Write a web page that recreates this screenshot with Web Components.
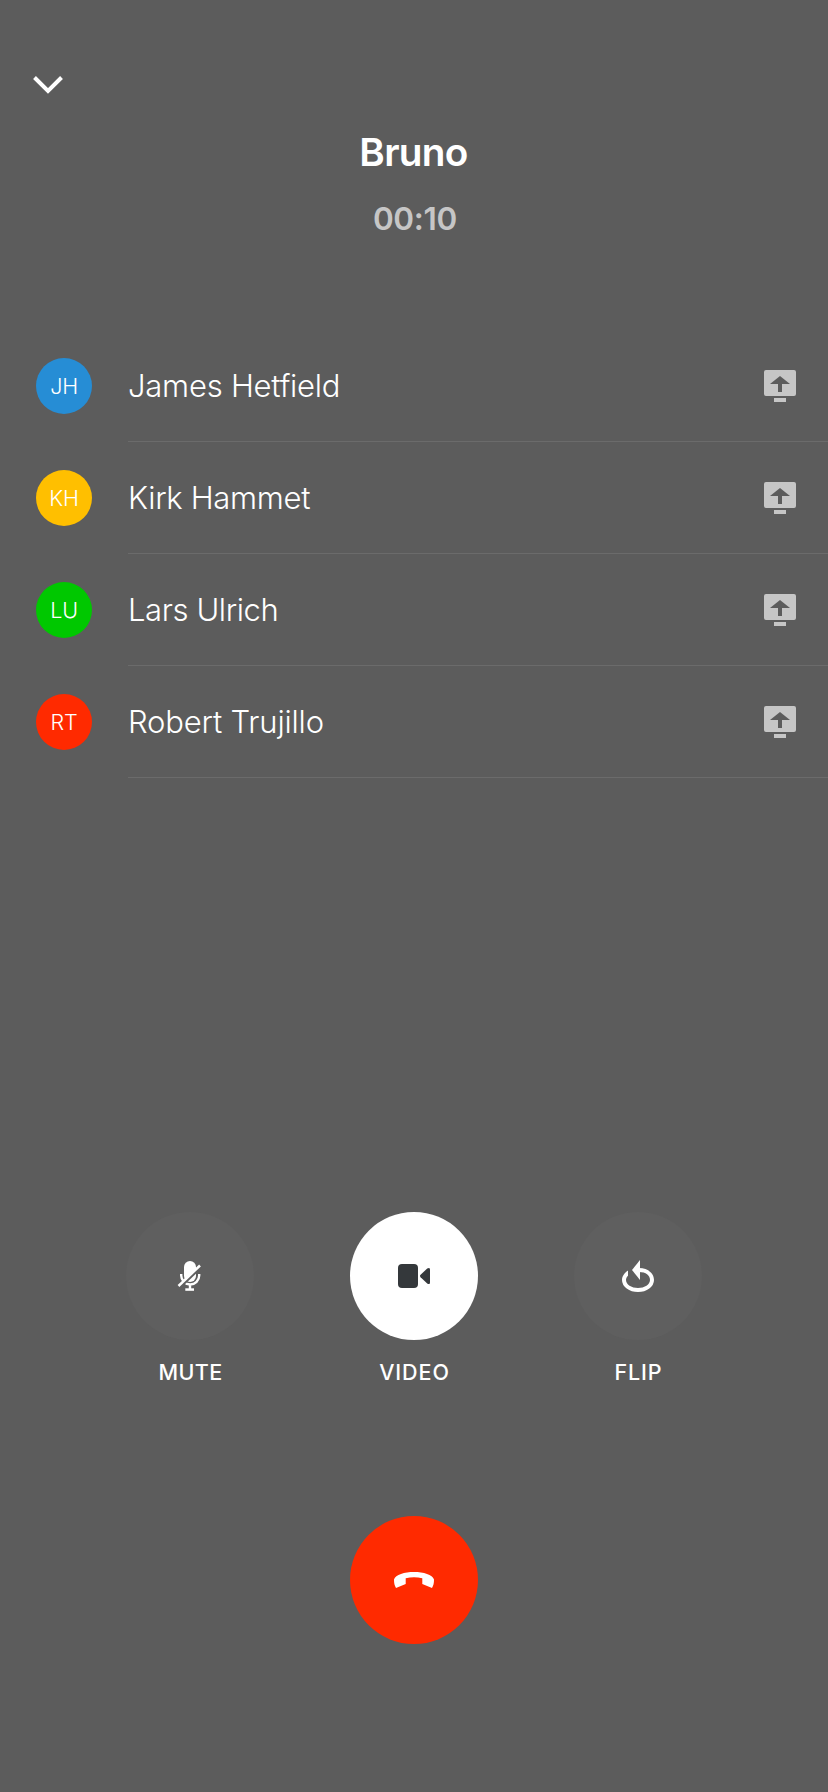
<!DOCTYPE html>
<html lang="en">
<head>
<meta charset="utf-8">
<title>Call</title>
<style>
html,body{margin:0;background:#5c5c5c}
body{font-family:Inter,"Liberation Sans",sans-serif;color:#fff}
</style>
</head>
<body>
<call-screen>
  <call-header name="Bruno" time="00:10"></call-header>
  <call-participant initials="JH" style="--tint:#268dd5;--track:-.24px">James Hetfield</call-participant>
  <call-participant initials="KH" style="--tint:#ffbf00;--track:-.32px">Kirk Hammet</call-participant>
  <call-participant initials="LU" style="--tint:#00c800;--track:-.4px">Lars Ulrich</call-participant>
  <call-participant initials="RT" style="--tint:#ff2a00;--track:-.18px">Robert Trujillo</call-participant>
  <call-button slot="controls" icon="mute" style="--fill:#5f5f5f;--track:.4px">MUTE</call-button>
  <call-button slot="controls" icon="video" style="--fill:#fff;--track:.9px">VIDEO</call-button>
  <call-button slot="controls" icon="flip" style="--fill:#5f5f5f;--track:.9px">FLIP</call-button>
  <call-button slot="hangup" icon="end" style="--fill:#ff2a00"></call-button>
</call-screen>
<script>
const icons = {
  down: '<svg width="32" height="20" viewBox="32 75 32 20" fill="none" stroke="#fff" stroke-width="4"><path d="M34.5 77.5 48 91 61.5 77.5"/></svg>',
  share: '<svg width="32" height="32" viewBox="0 0 32 32" fill="#c6c6c6"><path fill-rule="evenodd" d="M2 0H30Q32 0 32 2V24Q32 26 30 26H2Q0 26 0 24V2Q0 0 2 0ZM16 6 6 14H14V22H18V14H26Z"/><path d="M10 28H22V32H10Z"/></svg>',
  mute: '<svg width="128" height="128" viewBox="126 1212 128 128"><mask id="m" maskUnits="userSpaceOnUse" x="170" y="1250" width="40" height="50"><path fill="#fff" d="M170 1250H210V1300H170Z"/><path d="M176 1290.5 203 1264.8" stroke="#000" stroke-width="3.2"/></mask><g mask="url(#m)"><rect x="184" y="1261" width="12" height="21" rx="6" fill="#fff"/><path d="M181.2 1274V1275.5A9 9 0 0 0 199.2 1275.5V1274M190 1284.5V1289" fill="none" stroke="#fff" stroke-width="2.4"/><path d="M185.3 1288.3H194V1290.8H185.3Z" fill="#fff"/></g><path d="M178.5 1286 200 1265.5" stroke="#fff" stroke-width="2.5"/></svg>',
  video: '<svg width="128" height="128" viewBox="350 1212 128 128" fill="#34383b"><rect x="398" y="1264" width="20" height="24" rx="4"/><path d="M420.6 1274.8 427.2 1268.5Q428 1268 429 1268Q430 1268 430 1269.5V1282.5Q430 1284 429 1284Q428 1284 427.2 1283.5L420.6 1277.2Q419.4 1276 420.6 1274.8Z"/></svg>',
  flip: '<svg width="128" height="128" viewBox="574 1212 128 128" fill="#fff"><path d="M628 1270.6C625 1272.7 622 1276 622 1280A16 12 0 0 0 654 1280C654 1273.5 648 1268 639 1268V1272C646 1272 650 1275.5 650 1280A12 8 0 0 1 626 1280C626 1278 627 1276.8 628 1275.7Z"/><path d="M632 1270 640 1260V1280Z"/></svg>',
  end: '<svg width="128" height="128" viewBox="350 1516 128 128"><path fill="#fff" d="M396 1588C394.5 1585.5 394 1583 394 1579.5C395.5 1574.5 404.5 1572 414 1572S432.5 1574.5 434 1579.5C434 1583 433.5 1585.5 432 1588L422.3 1584V1578.2Q414 1576.4 405.7 1578.2V1584Z"/></svg>'
};

class CallScreen extends HTMLElement {
  connectedCallback() {
    this.attachShadow({mode: 'open'}).innerHTML = `
    <style>
      :host{display:flex;flex-direction:column;height:1792px;background:#5c5c5c;overflow:hidden}
      .controls{display:flex;justify-content:center;gap:96px;margin-top:434px;height:304px}
      .end{display:flex;justify-content:center}
    </style>
    <slot></slot>
    <div class="controls"><slot name="controls"></slot></div>
    <div class="end"><slot name="hangup"></slot></div>`;
  }
}

class CallHeader extends HTMLElement {
  connectedCallback() {
    this.attachShadow({mode: 'open'}).innerHTML = `
    <style>
      :host{display:block;height:330px;box-sizing:border-box;padding-top:75px;text-align:center;font-weight:600}
      svg{display:block;margin-left:32px}
      .name{font-size:38.7px;line-height:48px;letter-spacing:-.7px;margin-top:33px;padding-right:1px}
      .time{font-size:31.5px;line-height:40px;color:#c6c6c6;letter-spacing:-.3px;margin-top:23px;padding-left:2px}
    </style>
    ${icons.down}
    <div class="name">${this.getAttribute('name')}</div>
    <div class="time">${this.getAttribute('time')}</div>`;
  }
}

class CallParticipant extends HTMLElement {
  connectedCallback() {
    this.attachShadow({mode: 'open'}).innerHTML = `
    <style>
      :host{display:flex;height:112px;padding-left:36px;align-items:center;font-weight:300}
      .avatar{width:56px;height:56px;border-radius:50%;background:var(--tint);font-size:21.5px;line-height:56px;text-align:center;letter-spacing:-.2px;margin-right:36px}
      .row{flex:1;display:flex;align-items:center;justify-content:space-between;height:112px;box-sizing:border-box;border-bottom:1px solid #6b6b6b;padding-right:32px}
      .name{font-size:31px;line-height:40px;letter-spacing:var(--track);white-space:nowrap;padding-top:1px}
    </style>
    <div class="avatar">${this.getAttribute('initials')}</div>
    <div class="row"><span class="name"><slot></slot></span>${icons.share}</div>`;
  }
}

class CallButton extends HTMLElement {
  connectedCallback() {
    this.attachShadow({mode: 'open'}).innerHTML = `
    <style>
      :host{display:flex;flex-direction:column;align-items:center;width:128px}
      .disc{width:128px;height:128px;border-radius:50%;background:var(--fill)}
      svg{display:block}
      .label{font-size:21.5px;line-height:28px;font-weight:550;letter-spacing:var(--track);margin-top:18px;padding-left:1px}
    </style>
    <div class="disc">${icons[this.getAttribute('icon')]}</div>
    <div class="label"><slot></slot></div>`;
  }
}

customElements.define('call-screen', CallScreen);
customElements.define('call-header', CallHeader);
customElements.define('call-participant', CallParticipant);
customElements.define('call-button', CallButton);
</script>
</body>
</html>
